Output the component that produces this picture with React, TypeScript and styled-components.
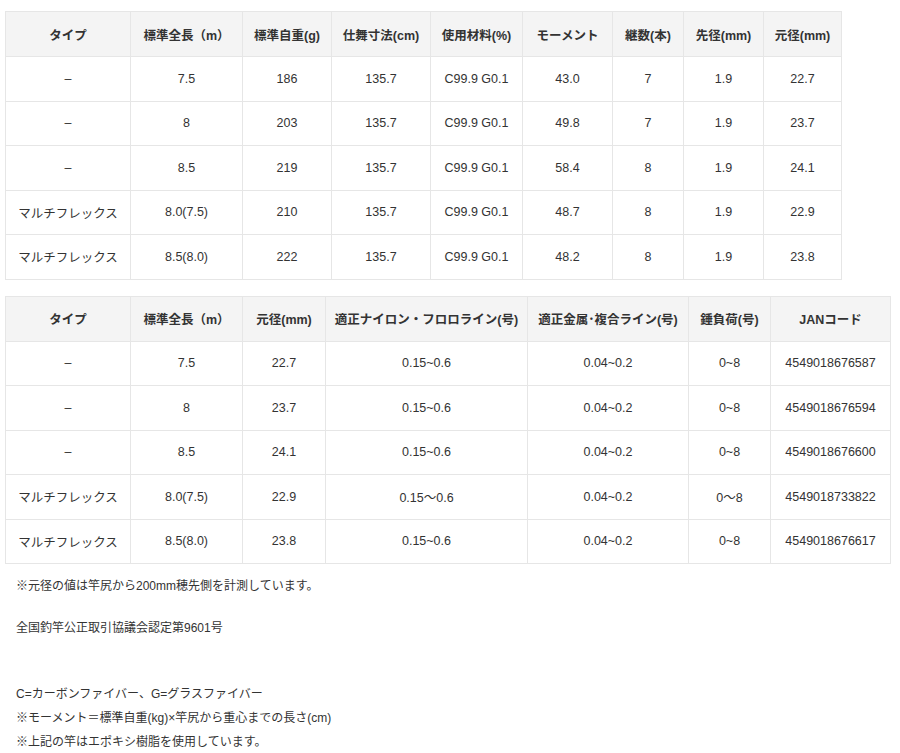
import React from "react";
import styled, { createGlobalStyle } from "styled-components";

const Global = createGlobalStyle`
  body { margin: 0; background: #fff; font-family: "Liberation Sans", "Noto Sans CJK JP", sans-serif; color: #333; }
`;
const Page = styled.div`padding: 11px 5px 0 5px;`;
const Table = styled.table<{ $w: number }>`
  border-collapse: collapse; table-layout: fixed; width: ${p => p.$w}px;
  font-size: 12px; margin-bottom: 16px;
`;
const Th = styled.th`
  background: #f4f4f4; font-weight: 700; height: 44px; padding: 0 4px;
  border: 1px solid #e6e6e6; text-align: center; color: #333; font-size: 12.5px;
`;
const Td = styled.td`
  height: 43.5px; padding: 0 4px; border: 1px solid #e6e6e6; text-align: center;
  color: #333; font-size: 12.5px;
`;
const Notes = styled.div`padding-left: 11px; font-size: 12px; line-height: 24px; color: #333; margin-top: -6px;`;
const Gap = styled.div<{ $h: number }>`height: ${p => p.$h}px;`;

const h1 = ["タイプ","標準全長（m）","標準自重(g)","仕舞寸法(cm)","使用材料(%)","モーメント","継数(本)","先径(mm)","元径(mm)"];
const w1 = [125,112,89,99,92,90,71,80,78];
const r1 = [
  ["–","7.5","186","135.7","C99.9 G0.1","43.0","7","1.9","22.7"],
  ["–","8","203","135.7","C99.9 G0.1","49.8","7","1.9","23.7"],
  ["–","8.5","219","135.7","C99.9 G0.1","58.4","8","1.9","24.1"],
  ["マルチフレックス","8.0(7.5)","210","135.7","C99.9 G0.1","48.7","8","1.9","22.9"],
  ["マルチフレックス","8.5(8.0)","222","135.7","C99.9 G0.1","48.2","8","1.9","23.8"],
];
const h2 = ["タイプ","標準全長（m）","元径(mm)","適正ナイロン・フロロライン(号)","適正金属･複合ライン(号)","錘負荷(号)","JANコード"];
const w2 = [125,112,83,202,161,82,120];
const r2 = [
  ["–","7.5","22.7","0.15~0.6","0.04~0.2","0~8","4549018676587"],
  ["–","8","23.7","0.15~0.6","0.04~0.2","0~8","4549018676594"],
  ["–","8.5","24.1","0.15~0.6","0.04~0.2","0~8","4549018676600"],
  ["マルチフレックス","8.0(7.5)","22.9","0.15～0.6","0.04~0.2","0～8","4549018733822"],
  ["マルチフレックス","8.5(8.0)","23.8","0.15~0.6","0.04~0.2","0~8","4549018676617"],
];

function Spec({ head, widths, rows }: { head: string[]; widths: number[]; rows: string[][] }) {
  return (
    <Table $w={widths.reduce((a, b) => a + b, 0)}>
      <colgroup>{widths.map((w, i) => <col key={i} style={{ width: w }} />)}</colgroup>
      <thead><tr>{head.map(h => <Th key={h}>{h}</Th>)}</tr></thead>
      <tbody>{rows.map((r, i) => <tr key={i}>{r.map((c, j) => <Td key={j}>{c}</Td>)}</tr>)}</tbody>
    </Table>
  );
}

export default function App() {
  return (
    <Page>
      <Global />
      <Spec head={h1} widths={w1} rows={r1} />
      <Spec head={h2} widths={w2} rows={r2} />
      <Notes>
        <div>※元径の値は竿尻から200mm穂先側を計測しています。</div>
        <Gap $h={18} />
        <div>全国釣竿公正取引協議会認定第9601号</div>
        <Gap $h={42} />
        <div>C=カーボンファイバー、G=グラスファイバー</div>
        <div>※モーメント＝標準自重(kg)×竿尻から重心までの長さ(cm)</div>
        <div>※上記の竿はエポキシ樹脂を使用しています。</div>
      </Notes>
    </Page>
  );
}
